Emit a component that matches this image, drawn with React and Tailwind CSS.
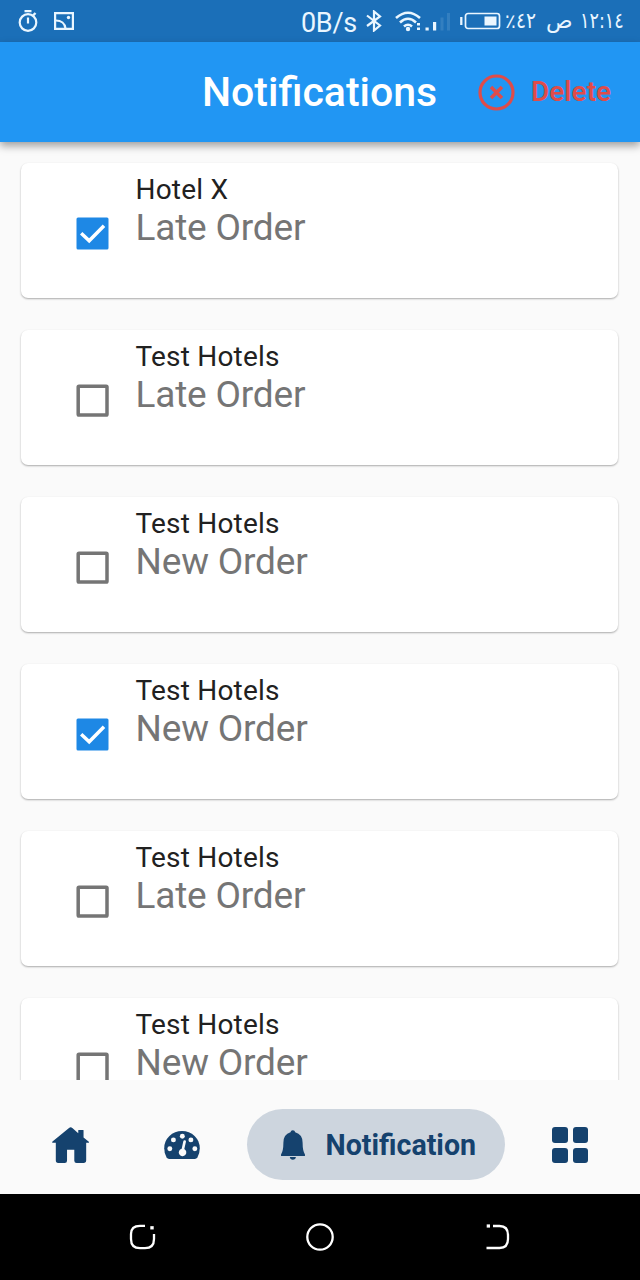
const notifications = [
  { hotel: 'Hotel X', kind: 'Late Order', checked: true },
  { hotel: 'Test Hotels', kind: 'Late Order', checked: false },
  { hotel: 'Test Hotels', kind: 'New Order', checked: false },
  { hotel: 'Test Hotels', kind: 'New Order', checked: true },
  { hotel: 'Test Hotels', kind: 'Late Order', checked: false },
  { hotel: 'Test Hotels', kind: 'New Order', checked: false },
];

function StatusBar() {
  return (
    <div className="flex h-[42px] shrink-0 items-center bg-[#1b6fb8] text-[#eaf6ff]">
      <svg className="ml-[18px] h-[24px] w-[20px]" viewBox="0 0 20 24" fill="none" stroke="currentColor" strokeWidth="2.200">
        <circle cx="10" cy="13.500" r="8.300" />
        <path d="M10 8.500v6M6.500 2.200h7" />
        <path d="M15 6.500l2.500-2.500" strokeWidth="2.400" />
      </svg>
      <svg className="ml-[16px] h-[18px] w-[20px]" viewBox="0 0 20 18" fill="none" stroke="currentColor" strokeWidth="2.200">
        <path d="M1.100 1.100h17.800v15.800H1.100z" />
        <path d="M2 8.500c5 0 9 3 9.500 8" />
        <circle cx="14.500" cy="5.500" r="1.700" fill="currentColor" stroke="none" />
      </svg>
      <span className="ml-[227px] mt-[3px] w-[57px] whitespace-nowrap text-[27px] leading-[40px] tracking-[-0.3px]">0B/s</span>
      <svg className="ml-[8px] h-[22px] w-[16px]" viewBox="0 0 16 22" fill="none" stroke="currentColor" strokeWidth="2.200">
        <path d="M1 5.500l13 10L8 20.500V1.500l6 5L1 16" />
      </svg>
      <svg className="ml-[13px] mt-[2px] h-[22px] w-[57px]" viewBox="0 0 57 22" fill="currentColor">
        <g fill="none" stroke="currentColor" strokeWidth="2.600">
          <path d="M1 7Q13-3.500 25 7" />
          <path d="M5 11.500Q13 4 21 11.500" />
          <path d="M9 15.500Q13 12 17 15.500" />
        </g>
        <circle cx="13" cy="18" r="2.200" />
        <path d="M22 12h3v2.500h-3zM22 16.500h3V19h-3zM30.500 16.500h3.200v3h-3.200zM38 11h3.200v8.500H38z" />
        <path d="M45.500 6.500h3v13h-3zM52 2h3v17.500h-3z" opacity=".12" />
      </svg>
      <svg className="ml-[8px] h-[18px] w-[41px]" viewBox="0 0 41 18" fill="none" stroke="currentColor" strokeWidth="1.700">
        <path d="M1.300 5v8" strokeWidth="2.300" />
        <rect x="5.500" y="1.500" width="34" height="15" rx="2.500" />
        <rect x="24.500" y="4.500" width="12" height="9" fill="currentColor" stroke="none" />
      </svg>
      <div className="ml-[4px] flex items-center whitespace-nowrap font-['DejaVu_Sans',sans-serif] text-[22px] leading-[42px]" dir="ltr">
        <span className="w-[11px] text-[20px]">٪</span>
        <span className="w-[22px] origin-left scale-x-[0.85]">٤٢</span>
        <span className="ml-[8px] w-[28px] text-[22px]">ص</span>
        <span className="ml-[6px] w-[43px] origin-left scale-x-[0.8]">١٢:١٤</span>
      </div>
    </div>
  );
}

function Header() {
  return (
    <header className="relative z-10 flex h-[100px] shrink-0 items-center bg-[#2196f3] shadow-[0_4px_8px_rgba(0,0,0,0.36)]">
      <h1 className="ml-[202px] w-[234px] whitespace-nowrap text-[41px] font-medium leading-[50px] text-white">Notifications</h1>
      <button className="ml-[42px] flex items-center text-[#df4c4a]">
        <svg className="h-[37px] w-[37px]" viewBox="0 0 37 37" fill="none" stroke="currentColor">
          <circle cx="18.500" cy="18.500" r="16.500" strokeWidth="3.200" />
          <path d="M13 13l11 11M24 13L13 24" strokeWidth="3.500" />
        </svg>
        <span className="ml-[16px] text-[28px] font-semibold leading-[32px]">Delete</span>
      </button>
    </header>
  );
}

function Checkbox({ checked }) {
  return (
    <svg className="ml-[55px] mt-[54px] h-[33px] w-[33px] shrink-0" viewBox="0 0 33 33" fill="none">
      {checked ? (
        <>
          <rect x=".500" y=".500" width="32" height="32" rx="1.500" fill="#1e88e5" />
          <path d="M5.200 16.300l8 7.500L28 8.700" stroke="white" strokeWidth="3.500" />
        </>
      ) : (
        <rect x="2.200" y="2.200" width="28.800" height="28.800" rx=".800" stroke="#757575" strokeWidth="3.500" />
      )}
    </svg>
  );
}

function Card({ item }) {
  return (
    <li className="flex h-[135px] shrink-0 items-start rounded-[7px] bg-white shadow-[0_1px_2px_rgba(0,0,0,0.32)]">
      <Checkbox checked={item.checked} />
      <div className="ml-[26.500px] pt-[10px]">
        <p className="text-[28px] leading-[34px] tracking-[0.200px] text-[#212121]">{item.hotel}</p>
        <p className="text-[37px] leading-[42px] tracking-[-0.180px] text-[#757575]">{item.kind}</p>
      </div>
    </li>
  );
}

function BottomNav() {
  return (
    <nav className="flex h-[114px] shrink-0 items-start bg-[#fafafa] text-[#15426e]">
      <svg className="ml-[52px] mt-[47px] h-[36px] w-[37px]" viewBox="127 260 111 109" fill="currentColor">
        <path d="M178 263q5-4 10 0l18 16v-7q-2-3 2-3h12q4 0 2 3v20l16 13q2 3-2 3h-6v53q0 8-8 8h-21q-7 0-7-7v-33h-22v33q0 7-7 7h-20q-7 0-7-8v-53h-8q-5 0-2-4z" />
      </svg>
      <svg className="ml-[75px] mt-[51px] h-[28px] w-[36px]" viewBox="462 272 108 85">
        <path d="M477 357q-5 0-8-5-7-13-7-28a54 52 0 0 1 108 0q0 15-7 28-3 5-8 5z" fill="currentColor" />
        <g fill="#fafafa">
          <circle cx="479" cy="326" r="7.500" />
          <circle cx="490" cy="299" r="7.500" />
          <circle cx="517" cy="288" r="7.500" />
          <circle cx="543" cy="299" r="7.500" />
          <circle cx="555" cy="326" r="7.500" />
          <path d="M520 303q1-4 5-3 4 0 3 5l-5 22a11.500 11.500 0 1 1-8-1z" />
        </g>
      </svg>
      <div className="ml-[47px] mt-[29px] flex h-[71px] w-[258px] items-center rounded-full bg-[#cdd5de]">
        <svg className="ml-[34px] h-[30px] w-[24px]" viewBox="155 121 71 89" fill="currentColor">
          <path d="M190 122q6 0 7 6 22 6 22 31 0 24 7 35v4h-71v-4q7-11 7-35 0-25 21-31 1-6 7-6z" />
          <path d="M181 201h18q-1 8-9 8t-9-8z" />
        </svg>
        <span className="ml-[20.500px] text-[28.600px] font-bold leading-[34px]">Notification</span>
      </div>
      <div className="ml-[47px] mt-[47px] grid grid-cols-2 gap-[5px]">
        <i className="h-[15.500px] w-[15.500px] rounded-[3px] bg-[#15426e]" />
        <i className="h-[15.500px] w-[15.500px] rounded-[3px] bg-[#15426e]" />
        <i className="h-[15.500px] w-[15.500px] rounded-[3px] bg-[#15426e]" />
        <i className="h-[15.500px] w-[15.500px] rounded-[3px] bg-[#15426e]" />
      </div>
    </nav>
  );
}

function SystemKeys() {
  return (
    <div className="flex h-[86px] shrink-0 items-center bg-black text-white">
      <svg className="ml-[129px] h-[26px] w-[27px]" viewBox="0 0 27 26" fill="none" stroke="currentColor" strokeWidth="2.300">
        <path d="M16 1.800H11Q2 1.800 2 10v5q0 9.200 9 9.200h5q9 0 9-9.200v-5" />
        <path d="M21.300 3.800h3.400" strokeWidth="3.300" />
      </svg>
      <svg className="ml-[150px] h-[28px] w-[28px]" viewBox="0 0 28 28" fill="none" stroke="currentColor" strokeWidth="2.300">
        <circle cx="14" cy="14" r="12.700" />
      </svg>
      <svg className="ml-[151px] h-[26px] w-[25px]" viewBox="0 0 25 26" fill="none" stroke="currentColor" strokeWidth="2.300">
        <path d="M8 2h6.500Q23 2 23 11v4q0 9-8.500 9H1.500" />
        <path d="M1.700 2h3.300" strokeWidth="3.200" />
      </svg>
    </div>
  );
}

export default function App() {
  return (
    <div className="flex h-[1280px] w-[640px] flex-col overflow-hidden bg-[#fafafa] font-[Roboto,'Liberation_Sans',sans-serif]">
      <StatusBar />
      <Header />
      <main className="h-[938px] shrink-0 overflow-hidden">
        <ul className="flex flex-col gap-[32px] pl-[21px] pr-[22px] pt-[21px]">
          {notifications.map((item, i) => (
            <Card key={i} item={item} />
          ))}
        </ul>
      </main>
      <BottomNav />
      <SystemKeys />
    </div>
  );
}
